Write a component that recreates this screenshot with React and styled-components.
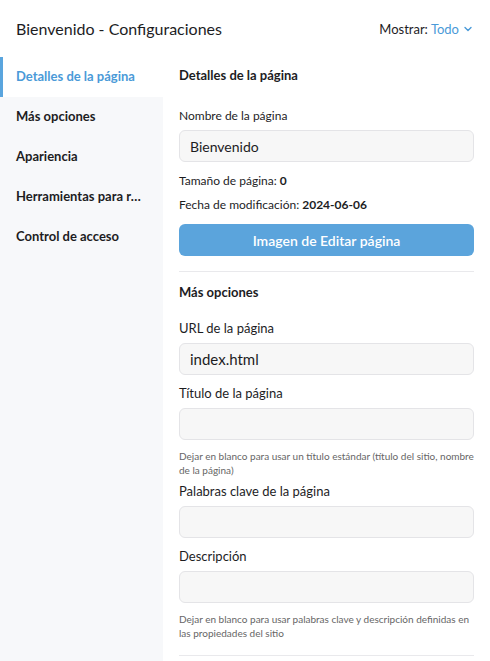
import React from 'react'
import styled, { createGlobalStyle } from 'styled-components'

const Global = createGlobalStyle`
  body {
    margin: 0;
    font-family: Lato, "Noto Sans", sans-serif;
    color: #1d1d1f;
    background: #fff;
  }
`

const menu = ['Detalles de la página', 'Más opciones', 'Apariencia', 'Herramientas para redes sociales', 'Control de acceso']

const App = () => {
  return (
    <Page>
      <Global />
      <Header>
        <Title>Bienvenido - Configuraciones</Title>
        <Filter>
          Mostrar: <FilterValue>Todo</FilterValue>
          <svg width="10" height="10" viewBox="0 0 10 10">
            <path d="M2 3.5 L5 6.5 L8 3.5" fill="none" stroke="#4a9ad8" strokeWidth="1.4" strokeLinecap="round" strokeLinejoin="round" />
          </svg>
        </Filter>
      </Header>
      <Body>
        <Sidebar>
          {menu.map((m, i) => (
            <MenuItem key={m} active={i === 0}>{m}</MenuItem>
          ))}
        </Sidebar>
        <Content>
          <Section first>
            <SectionTitle gap={25}>Detalles de la página</SectionTitle>
            <Field>
              <Label>Nombre de la página</Label>
              <Input defaultValue="Bienvenido" />
            </Field>
            <Info>Tamaño de página: <b>0</b></Info>
            <Info>Fecha de modificación: <b>2024-06-06</b></Info>
            <Button>Imagen de Editar página</Button>
          </Section>
          <Section>
            <SectionTitle gap={20}>Más opciones</SectionTitle>
            <Field>
              <Label large>URL de la página</Label>
              <Input large defaultValue="index.html" />
            </Field>
            <Field>
              <Label large>Título de la página</Label>
              <Input large />
              <Help>Dejar en blanco para usar un título estándar (título del sitio, nombre de la página)</Help>
            </Field>
            <Field>
              <Label large>Palabras clave de la página</Label>
              <Input large />
            </Field>
            <Field last>
              <Label large>Descripción</Label>
              <Input large />
              <Help>Dejar en blanco para usar palabras clave y descripción definidas en las propiedades del sitio</Help>
            </Field>
          </Section>
        </Content>
      </Body>
    </Page>
  )
}

const Page = styled.div`
  width: 490px;
  height: 661px;
  overflow: hidden;
  display: flex;
  flex-direction: column;
`

const Header = styled.div`
  height: 57px;
  flex-shrink: 0;
  display: flex;
  align-items: center;
  justify-content: space-between;
  padding: 0 16px 0 16px;
  box-sizing: border-box;
`

const Title = styled.h1`
  margin: 0;
  font-size: 16px;
  font-weight: 400;
  color: #1d1d1f;
`

const Filter = styled.div`
  display: flex;
  align-items: center;
  gap: 4px;
  font-size: 13px;
  color: #1d1d1f;
  margin-right: 1px;
`

const FilterValue = styled.span`
  color: #4a9ad8;
  margin-left: -1px;
`

const Body = styled.div`
  flex: 1;
  display: flex;
  min-height: 0;
`

const Sidebar = styled.div`
  width: 163px;
  flex-shrink: 0;
  background: #f7f8fa;
`

const MenuItem = styled.div`
  height: 40px;
  padding: 0 16px;
  font-size: 13px;
  font-weight: 700;
  white-space: nowrap;
  overflow: hidden;
  text-overflow: ellipsis;
  line-height: 38px;
  color: ${p => (p.active ? '#4a9ad8' : '#1d1d1f')};
  background: ${p => (p.active ? '#fff' : 'transparent')};
  box-shadow: ${p => (p.active ? 'inset 3px 0 0 #5aa5de' : 'none')};
`

const Content = styled.div`
  flex: 1;
  padding: 0 16px;
`

const Section = styled.div`
  border-bottom: 1px solid #e9e9ec;
  padding: ${p => (p.first ? '10px' : '12px')} 0 15px;
  display: flex;
  flex-direction: column;
`

const SectionTitle = styled.h2`
  margin: 0 0 ${p => p.gap}px;
  font-size: 13px;
  font-weight: 700;
  line-height: 16px;
`

const Field = styled.div`
  display: flex;
  flex-direction: column;
  margin-bottom: ${p => (p.last ? 4 : 10)}px;
`

const Label = styled.label`
  font-size: ${p => (p.large ? 13 : 12)}px;
  line-height: 16px;
  margin-bottom: ${p => (p.large ? 7 : 6)}px;
  color: #1d1d1f;
`

const Input = styled.input`
  height: 32px;
  box-sizing: border-box;
  border: 1px solid #e4e4e7;
  border-radius: 6px;
  background: #f7f7f7;
  padding: 0 10px;
  font-family: inherit;
  font-size: ${p => (p.large ? 15 : 14)}px;
  color: #1d1d1f;
  outline: none;
`

const Help = styled.div`
  font-size: 10px;
  line-height: 14px;
  color: #666;
  margin: 9px 0 -4px;
`

const Info = styled.div`
  font-size: 12px;
  line-height: 16px;
  margin-top: 1px;
  margin-bottom: 7px;
  b { font-weight: 700; }
`

const Button = styled.button`
  height: 32px;
  margin-top: 4px;
  border: none;
  border-radius: 6px;
  background: #5ba4dc;
  color: #fff;
  font-family: inherit;
  font-size: 14px;
  font-weight: 600;
`

export default App
